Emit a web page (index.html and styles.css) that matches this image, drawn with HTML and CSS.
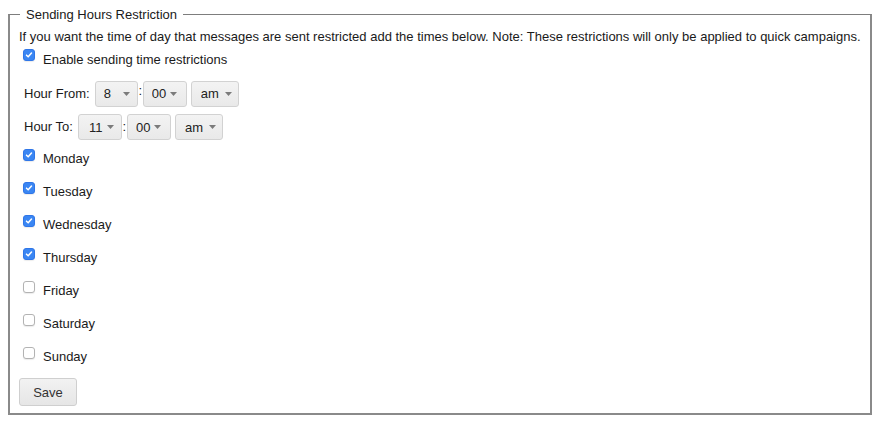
FILE: index.html
```html
<!DOCTYPE html>
<html>
<head>
<meta charset="utf-8">
<link rel="stylesheet" href="styles.css">
</head>
<body>
<fieldset class="panel">
  <legend class="panel-title">Sending Hours Restriction</legend>
  <p class="intro">If you want the time of day that messages are sent restricted add the times below. Note: These restrictions will only be applied to quick campaigns.</p>
  <label class="check-row enable-row"><input type="checkbox" class="check" checked><span>Enable sending time restrictions</span></label>
  <div class="time-row first">
    <span class="time-label">Hour From:</span>
    <span class="sel hour"><select><option>8</option></select><svg class="arrow" width="7" height="4" viewBox="0 0 7 4"><path d="M0 0h7L3.5 4z" fill="#7b7b7b"/></svg></span>
    <span class="colon">:</span>
    <span class="sel minute"><select><option>00</option></select><svg class="arrow" width="7" height="4" viewBox="0 0 7 4"><path d="M0 0h7L3.5 4z" fill="#7b7b7b"/></svg></span>
    <span class="sel ampm"><select><option>am</option></select><svg class="arrow" width="7" height="4" viewBox="0 0 7 4"><path d="M0 0h7L3.5 4z" fill="#7b7b7b"/></svg></span>
  </div>
  <div class="time-row last">
    <span class="time-label">Hour To:</span>
    <span class="sel hour wide"><select><option>11</option></select><svg class="arrow" width="7" height="4" viewBox="0 0 7 4"><path d="M0 0h7L3.5 4z" fill="#7b7b7b"/></svg></span>
    <span class="colon">:</span>
    <span class="sel minute"><select><option>00</option></select><svg class="arrow" width="7" height="4" viewBox="0 0 7 4"><path d="M0 0h7L3.5 4z" fill="#7b7b7b"/></svg></span>
    <span class="sel ampm"><select><option>am</option></select><svg class="arrow" width="7" height="4" viewBox="0 0 7 4"><path d="M0 0h7L3.5 4z" fill="#7b7b7b"/></svg></span>
  </div>
  <label class="check-row day"><input type="checkbox" class="check" checked><span>Monday</span></label>
  <label class="check-row day"><input type="checkbox" class="check" checked><span>Tuesday</span></label>
  <label class="check-row day"><input type="checkbox" class="check" checked><span>Wednesday</span></label>
  <label class="check-row day"><input type="checkbox" class="check" checked><span>Thursday</span></label>
  <label class="check-row day"><input type="checkbox" class="check"><span>Friday</span></label>
  <label class="check-row day"><input type="checkbox" class="check"><span>Saturday</span></label>
  <label class="check-row day"><input type="checkbox" class="check"><span>Sunday</span></label>
  <button class="save" type="button">Save</button>
</fieldset>
</body>
</html>
```

FILE: styles.css
```css
html, body {
  margin: 0;
  padding: 0;
  background: #fff;
}
body {
  padding: 7px 8px 0 8px;
  font-family: "Liberation Sans", Arial, sans-serif;
  font-size: 13px;
  color: #1a1a1a;
}
.panel {
  box-sizing: border-box;
  width: 861px;
  height: 408px;
  margin: 0;
  padding: 0 9px 8px 9px;
  border-top: 1px solid #7d7d7d;
  border-left: 2px solid #8a8a8a;
  border-right: 2px solid #8a8a8a;
  border-bottom: 2px solid #8a8a8a;
}
.panel-title {
  margin-left: 1px;
  padding: 0 6px;
  line-height: 15px;
  font-size: 13px;
  color: #1a1a1a;
}
.intro {
  margin: 7px 0 0 0;
  line-height: 16px;
  white-space: nowrap;
}
.check-row {
  display: flex;
  align-items: center;
  cursor: default;
}
.enable-row {
  height: 22px;
  margin-top: 3px;
}
.day {
  height: 33px;
}
.check {
  -webkit-appearance: none;
  appearance: none;
  box-sizing: border-box;
  width: 12px;
  height: 12px;
  margin: 0 8px 8px 4px;
  border: 1px solid #b3b3b3;
  border-radius: 3px;
  background: #fff;
  box-shadow: 0 1px 1px rgba(0,0,0,0.08);
  flex: none;
}
.check:checked {
  border-color: #2f76e8;
  background: #3a86f3 url("data:image/svg+xml;utf8,<svg xmlns='http://www.w3.org/2000/svg' width='12' height='12' viewBox='0 0 12 12'><path d='M3 6.2 5 8.2 9 3.6' fill='none' stroke='white' stroke-width='1.8' stroke-linecap='round' stroke-linejoin='round'/></svg>") center/10px 10px no-repeat;
}
.time-row {
  display: flex;
  align-items: center;
  height: 33px;
  padding-left: 5px;
}
.time-row.first {
  margin-top: 7px;
}
.time-row.last {
  height: 32px;
  align-items: flex-start;
  padding-top: 4px;
  box-sizing: border-box;
}
.time-row.last .time-label {
  line-height: 26px;
}
.time-label {
  margin-right: 5px;
}
.sel {
  position: relative;
  display: inline-flex;
  align-items: center;
  box-sizing: border-box;
  height: 26px;
  border: 1px solid #d2d2d2;
  border-radius: 3px;
  background: linear-gradient(#f3f3f3, #e9e9e9);
  flex: none;
}
.sel select {
  -webkit-appearance: none;
  appearance: none;
  border: none;
  background: transparent;
  font-family: inherit;
  font-size: 13px;
  color: #222;
  height: 100%;
  width: 100%;
  padding: 0 0 0 8px;
  margin: 0;
  outline: none;
}
.sel .arrow {
  position: absolute;
  top: 10px;
  pointer-events: none;
}
.hour { width: 43px; }
.hour .arrow { right: 7px; }
.hour.wide { width: 44px; }
.hour.wide select { padding-left: 10px; }
.minute { width: 44px; }
.minute .arrow { right: 9px; }
.ampm { width: 48px; margin-left: 4px; }
.ampm select { padding-left: 9px; }
.ampm .arrow { right: 6px; }
.colon {
  width: 5px;
  text-align: center;
  line-height: 26px;
  padding-bottom: 6px;
}
.save {
  display: block;
  box-sizing: border-box;
  width: 58px;
  height: 28px;
  margin-top: 5px;
  border: 1px solid #cfcfcf;
  border-radius: 3px;
  background: linear-gradient(#f2f2f2, #e6e6e6);
  font-family: inherit;
  font-size: 13px;
  color: #333;
  padding: 0;
}
```
